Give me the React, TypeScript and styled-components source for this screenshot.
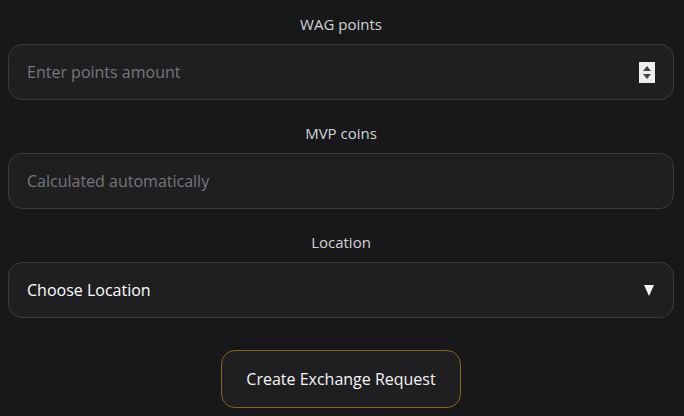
import React from "react";
import styled, { createGlobalStyle } from "styled-components";

const GlobalStyle = createGlobalStyle`
  html, body {
    margin: 0;
    padding: 0;
    background: #18181b;
    font-family: "Open Sans", "Noto Sans", sans-serif;
  }
`;

const Form = styled.form`
  display: flex;
  flex-direction: column;
  padding: 14px 10px 0 8px;
`;

const Field = styled.div`
  display: flex;
  flex-direction: column;
  gap: 10px;
  margin-bottom: 23px;
`;

const Label = styled.label`
  text-align: center;
  font-size: 15px;
  line-height: 20px;
  color: #d4d4d6;
`;

const Box = styled.div`
  position: relative;
  display: flex;
  align-items: center;
  height: 56px;
  box-sizing: border-box;
  padding: 0 18px;
  border: 1px solid #3b3b3f;
  border-radius: 14px;
  background: #1f1f22;
`;

const Input = styled.input`
  flex: 1;
  min-width: 0;
  border: none;
  outline: none;
  background: transparent;
  font-family: inherit;
  font-size: 16px;
  color: #f2f2f2;
  padding: 0;
  &::placeholder {
    color: #77777b;
  }
  &::-webkit-inner-spin-button,
  &::-webkit-outer-spin-button {
    -webkit-appearance: none;
    margin: 0;
  }
  -moz-appearance: textfield;
`;

const Spinner = styled.div`
  width: 16px;
  height: 21px;
  background: #eeeeee;
  display: flex;
  flex-direction: column;
  align-items: center;
  justify-content: center;
  gap: 3px;
`;

const SelectText = styled.span`
  flex: 1;
  font-size: 16px;
  font-weight: 500;
  color: #ffffff;
`;

const Caret = styled.span`
  width: 0;
  height: 0;
  border-left: 5.5px solid transparent;
  border-right: 5.5px solid transparent;
  border-top: 11px solid #f4f4f4;
  margin-right: 1px;
`;

const Actions = styled.div`
  display: flex;
  justify-content: center;
  margin-top: 9px;
`;

const Button = styled.button`
  width: 240px;
  height: 58px;
  border: 1px solid #86661a;
  border-radius: 14px;
  background: #1f1f22;
  color: #f4f4f4;
  font-family: inherit;
  font-size: 16px;
  cursor: pointer;
`;

const Arrow = ({ up }: { up?: boolean }) => (
  <svg width="8" height="5" viewBox="0 0 8 5">
    <path d={up ? "M4 0 L8 5 L0 5 Z" : "M0 0 L8 0 L4 5 Z"} fill="#444" />
  </svg>
);

export default function App() {
  return (
    <>
      <GlobalStyle />
      <Form onSubmit={(e) => e.preventDefault()}>
        <Field>
          <Label>WAG points</Label>
          <Box>
            <Input type="number" placeholder="Enter points amount" />
            <Spinner>
              <Arrow up />
              <Arrow />
            </Spinner>
          </Box>
        </Field>
        <Field>
          <Label>MVP coins</Label>
          <Box>
            <Input placeholder="Calculated automatically" readOnly />
          </Box>
        </Field>
        <Field>
          <Label>Location</Label>
          <Box>
            <SelectText>Choose Location</SelectText>
            <Caret />
          </Box>
        </Field>
        <Actions>
          <Button type="submit">Create Exchange Request</Button>
        </Actions>
      </Form>
    </>
  );
}
